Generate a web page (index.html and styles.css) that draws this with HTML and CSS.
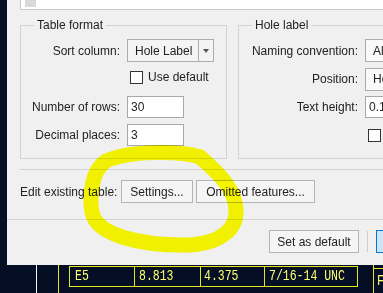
FILE: index.html
```html
<!DOCTYPE html>
<html lang="en">
<head>
  <meta charset="UTF-8" />
  <meta name="viewport" content="width=device-width, initial-scale=1.0"/>
  <title>Hole Table</title>
  <link rel="stylesheet" href="styles.css">
</head>
<body>

  <div class="screen">
    <div class="dialog">
      <div class="listbox"><span class="thumb"></span></div>

      <div class="groups">
        <fieldset class="group group-table">
          <legend>Table format</legend>
          <div class="form">
            <label class="lbl">Sort column:</label>
            <div class="combo combo-sort"><span class="val">Hole Label</span><span class="drop"><i class="arrow"></i></span></div>
            <span></span>
            <label class="check"><span class="box"></span>Use default</label>
            <label class="lbl">Number of rows:</label>
            <div class="input">30</div>
            <label class="lbl">Decimal places:</label>
            <div class="input">3</div>
          </div>
        </fieldset>

        <fieldset class="group group-hole">
          <legend>Hole label</legend>
          <div class="form">
            <label class="lbl">Naming convention:</label>
            <div class="combo combo-wide"><span class="val">Alphabetic</span></div>
            <label class="lbl">Position:</label>
            <div class="combo combo-wide"><span class="val">Hole center</span></div>
            <label class="lbl">Text height:</label>
            <div class="input input-wide">0.125</div>
            <span></span>
            <label class="check"><span class="box"></span>Show leader</label>
          </div>
        </fieldset>
      </div>

      <hr class="sep">

      <div class="edit-row">
        <span class="edit-label">Edit existing table:</span>
        <button class="btn btn-settings">Settings...</button>
        <button class="btn btn-omitted">Omitted features...</button>
      </div>

      <hr class="sep sep-full">

      <div class="footer">
        <button class="btn btn-default">Set as default</button>
        <span class="vsep"></span>
        <button class="btn btn-primary">OK</button>
      </div>
    </div>

    <div class="cad">
      <span class="cad-gap"></span>
      <span class="cad-line cad-line-white"></span>
      <span class="cad-line cad-line-yellow"></span>
      <div class="cad-row">
        <div class="cad-cell c1"><span class="cad-text">E5</span></div>
        <div class="cad-cell c2"><span class="cad-text">8.813</span></div>
        <div class="cad-cell c3"><span class="cad-text">4.375</span></div>
        <div class="cad-cell c4"><span class="cad-text">7/16-14 UNC</span></div>
      </div>
      <div class="cad-f"><div class="cad-fbox"><span class="cad-text">F</span></div></div>
    </div>

    <!-- highlighter mark drawn over the dialog -->
    <svg class="highlight" width="383" height="293" viewBox="0 0 383 293">
      <path d="M200 157 C178 150 128 151 106 161 C92 170 89 195 92 212 C96 235 140 246 190 245 C222 243 237 228 236 210 C235 190 222 176 200 157 Z"
            fill="none" stroke="#ffff00" stroke-width="15" stroke-linejoin="round" stroke-linecap="round"/>
    </svg>
  </div>

</body>
</html>
```

FILE: styles.css
```css
body {
  margin: 0;
  background: #040e25;
  font-family: "Liberation Sans", Arial, sans-serif;
  font-size: 12px;
  color: #222;
}

.screen {
  position: relative;
  width: 383px;
  height: 293px;
  overflow: hidden;
}

.dialog {
  margin-left: 7px;
  width: 376px;
  height: 265px;
  box-sizing: border-box;
  padding-left: 13px;
  background: #f0f0f0;
  overflow: hidden;
}

.listbox {
  width: 400px;
  height: 10px;
  box-sizing: border-box;
  padding-left: 4px;
  background: #fff;
  border-left: 1px solid #c9c9c9;
  border-bottom: 1px solid #c9c9c9;
}

.thumb {
  display: block;
  width: 11px;
  height: 7px;
  background: #d9d9d9;
}

.groups {
  display: flex;
  gap: 11px;
  margin-top: 7px;
}

.group {
  flex: none;
  margin: 0;
  min-width: 0;
  padding: 6px 0 12px 5px;
  border: 1px solid #d3d3d3;
}

.group-table {
  width: 207px;
  box-sizing: border-box;
}

.group-hole {
  width: 230px;
  box-sizing: border-box;
}

legend {
  margin-left: 8px;
  padding: 0 3px;
  line-height: 16px;
}

.form {
  display: grid;
  grid-template-columns: 94px auto;
  grid-template-rows: 23px 22px 22px 22px;
  column-gap: 7px;
  row-gap: 6px;
  align-items: center;
}

.group-hole .form {
  grid-template-columns: 114px auto;
}

.lbl {
  text-align: right;
  white-space: nowrap;
}

.combo {
  display: flex;
  align-items: center;
  height: 23px;
  box-sizing: border-box;
  border: 1px solid #acacac;
  background: #f4f4f4;
}

.combo-sort {
  width: 87px;
}

.combo-wide {
  width: 110px;
  background: #f9f9f9;
}

.combo .val {
  flex: 1;
  padding-left: 7px;
  white-space: nowrap;
}

.drop {
  display: flex;
  align-items: center;
  justify-content: center;
  width: 14px;
  height: 100%;
  border-left: 1px solid #acacac;
}

.arrow {
  width: 0;
  height: 0;
  border-top: 4px solid #555;
  border-left: 3.5px solid transparent;
  border-right: 3.5px solid transparent;
}

.input {
  width: 57px;
  height: 22px;
  box-sizing: border-box;
  padding-left: 3px;
  line-height: 20px;
  border: 1px solid #a8a8a8;
  background: #fff;
}

.input-wide {
  width: 110px;
}

.check {
  display: flex;
  align-items: center;
  gap: 5px;
  white-space: nowrap;
}

.group-table .check {
  align-self: start;
  margin-top: 2px;
}

.box {
  width: 13px;
  height: 13px;
  box-sizing: border-box;
  margin-left: 3px;
  border: 1px solid #333;
  background: #fff;
}

.sep {
  margin: 10px 0 0;
  border: 0;
  border-top: 1px solid #d3d3d3;
}

.sep-full {
  margin: 16px 0 0 -13px;
}

.edit-row {
  display: flex;
  align-items: center;
  gap: 3px;
  margin-top: 10px;
  height: 23px;
}

.edit-label {
  width: 98px;
}

.btn {
  height: 23px;
  padding: 0;
  font-family: inherit;
  font-size: 12px;
  color: #222;
  border: 1px solid #b4b4b4;
  background: #f5f5f5;
  white-space: nowrap;
}

.btn-settings {
  width: 72px;
}

.btn-omitted {
  width: 119px;
}

.footer {
  display: flex;
  align-items: center;
  margin-top: 10px;
  padding-left: 249px;
}

.btn-default {
  flex: none;
  width: 90px;
}

.vsep {
  flex: none;
  width: 1px;
  height: 21px;
  margin: 0 8px;
  background: #cdcdcd;
}

.btn-primary {
  flex: none;
  width: 75px;
  background: #cce4f7;
  border-color: #0078d7;
}

.cad {
  display: flex;
  height: 28px;
  font-family: "Liberation Mono", "Courier New", monospace;
  font-size: 11.5px;
  color: #ffff70;
}

.cad > * {
  flex: none;
}

.cad-gap {
  width: 36px;
}

.cad-line {
  box-sizing: border-box;
}

.cad-line-white {
  width: 22px;
  border-left: 1px solid #f4f4f4;
}

.cad-line-yellow {
  width: 11px;
  border-left: 1px solid #e6e61e;
}

.cad-row {
  display: flex;
  align-self: flex-start;
  margin-top: 1px;
  height: 19px;
  border: 1px solid #e6e61e;
  border-right: 0;
}

.cad-cell {
  box-sizing: border-box;
  padding-left: 4px;
  border-right: 1px solid #e6e61e;
  line-height: 17px;
  white-space: nowrap;
}

.c1 { width: 65px; padding-left: 5px; }
.c2 { width: 66px; }
.c3 { width: 64px; padding-left: 3px; }
.c4 { width: 93px; }

.cad-text {
  display: inline-block;
  transform: scaleY(1.2);
}

.cad-f {
  margin-left: 15px;
  border-left: 1px solid #e6e61e;
  width: 20px;
}

.cad-fbox {
  margin-top: 3px;
  height: 22px;
  box-sizing: border-box;
  padding: 5px 0 0 3px;
  border-top: 1px solid #e6e61e;
  line-height: 14px;
}

.highlight {
  position: absolute;
  left: 0;
  top: 0;
  mix-blend-mode: multiply;
  pointer-events: none;
}
```
